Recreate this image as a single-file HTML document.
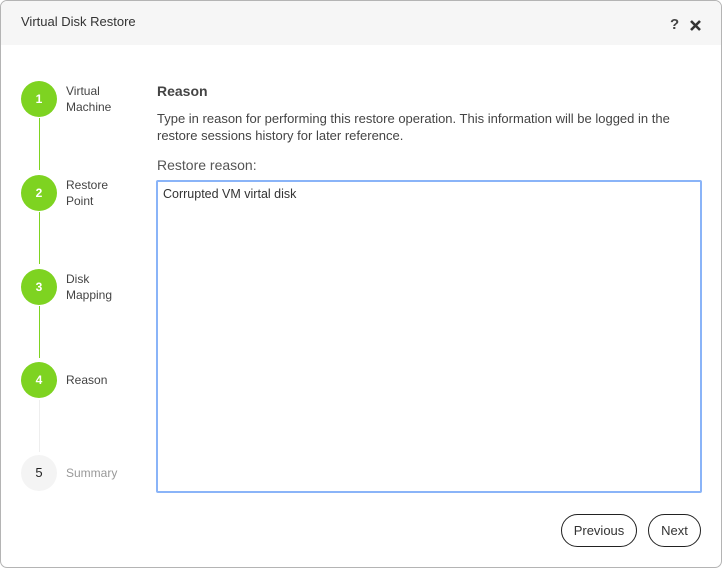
<!DOCTYPE html>
<html><head><meta charset="utf-8"><style>
*{box-sizing:border-box;margin:0;padding:0}
body{width:722px;height:568px;background:#fff;font-family:"Liberation Sans",sans-serif;color:#333;position:relative;overflow:hidden}
.win{position:absolute;left:0;top:0;width:722px;height:568px;border:1px solid #b4b4b4;border-radius:7px;overflow:hidden;background:#fff}
.hdr{position:absolute;left:0;top:0;right:0;height:44px;background:#f6f6f6}
.title{position:absolute;left:20px;top:13px;font-size:13px;color:#333}
.q{position:absolute;left:669px;top:15px;font-size:15px;font-weight:bold;color:#444}
.x{position:absolute;left:688px;top:18px}
.c{position:absolute;left:20px;width:36px;height:36px;border-radius:50%;background:#7ed321;color:#fff;font-size:12px;font-weight:bold;text-align:center;line-height:36px}
.c.off{background:#f4f4f4;color:#222;font-weight:normal;font-size:13px}
.l{position:absolute;left:38px;width:1px;background:#7ed321}
.s{position:absolute;left:65px;font-size:12px;line-height:16px;color:#444}
h3{position:absolute;left:156px;top:82px;font-size:14px;font-weight:bold;color:#444}
.d{position:absolute;left:156px;top:109px;width:535px;font-size:13px;line-height:17px;color:#444}
.lab{position:absolute;left:156px;top:156px;font-size:14px;color:#555}
.ta{position:absolute;left:155px;top:179px;width:546px;height:313px;border:2px solid #8ab4f8;border-radius:2px;padding:5px 5px;font-size:12.5px;color:#333}
.b{position:absolute;top:513px;height:33px;border:1px solid #222;border-radius:17px;font-size:13px;text-align:center;line-height:31px;color:#333}
</style></head><body><div class="win">
<div class="hdr"><div class="title">Virtual Disk Restore</div><div class="q">?</div>
<svg class="x" width="13" height="13" viewBox="0 0 13 13"><path d="M2 2L11 11M11 2L2 11" stroke="#333" stroke-width="2.6"/></svg></div>
<div class="l" style="top:117px;height:52px"></div>
<div class="l" style="top:211px;height:52px"></div>
<div class="l" style="top:305px;height:52px"></div>
<div class="l" style="top:399px;height:52px;background:#eee"></div>
<div class="c" style="top:80px">1</div><div class="s" style="top:82px">Virtual<br>Machine</div>
<div class="c" style="top:174px">2</div><div class="s" style="top:176px">Restore<br>Point</div>
<div class="c" style="top:268px">3</div><div class="s" style="top:270px">Disk<br>Mapping</div>
<div class="c" style="top:361px">4</div><div class="s" style="top:371px">Reason</div>
<div class="c off" style="top:454px">5</div><div class="s" style="top:464px;color:#999">Summary</div>
<h3>Reason</h3>
<div class="d">Type in reason for performing this restore operation. This information will be logged in the restore sessions history for later reference.</div>
<div class="lab">Restore reason:</div>
<div class="ta">Corrupted VM virtal disk</div>
<div class="b" style="left:560px;width:76px">Previous</div>
<div class="b" style="left:647px;width:53px">Next</div>
</div></body></html>
